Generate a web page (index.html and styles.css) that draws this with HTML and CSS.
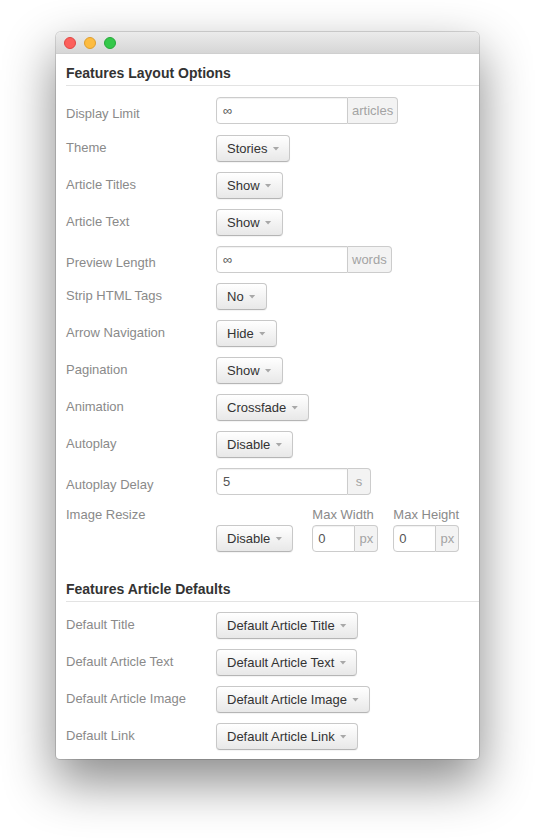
FILE: index.html
```html
<!DOCTYPE html>
<html>
<head>
<meta charset="utf-8">
<link rel="stylesheet" href="styles.css">
</head>
<body>
<div class="window">
  <div class="titlebar">
    <span class="light red"></span>
    <span class="light yellow"></span>
    <span class="light green"></span>
  </div>
  <div class="content">
    <h2 class="legend">Features Layout Options</h2>
    <div class="rows first">
      <div class="row row-input row-tall">
        <span class="label">Display Limit</span>
        <div class="input-append"><span class="field w-long">∞</span><span class="addon">articles</span></div>
      </div>
      <div class="row">
        <span class="label">Theme</span>
        <span class="btn">Stories<span class="caret"></span></span>
      </div>
      <div class="row">
        <span class="label">Article Titles</span>
        <span class="btn">Show<span class="caret"></span></span>
      </div>
      <div class="row">
        <span class="label">Article Text</span>
        <span class="btn">Show<span class="caret"></span></span>
      </div>
      <div class="row row-input">
        <span class="label">Preview Length</span>
        <div class="input-append"><span class="field w-long">∞</span><span class="addon">words</span></div>
      </div>
      <div class="row">
        <span class="label">Strip HTML Tags</span>
        <span class="btn">No<span class="caret"></span></span>
      </div>
      <div class="row">
        <span class="label">Arrow Navigation</span>
        <span class="btn">Hide<span class="caret"></span></span>
      </div>
      <div class="row">
        <span class="label">Pagination</span>
        <span class="btn">Show<span class="caret"></span></span>
      </div>
      <div class="row">
        <span class="label">Animation</span>
        <span class="btn">Crossfade<span class="caret"></span></span>
      </div>
      <div class="row">
        <span class="label">Autoplay</span>
        <span class="btn">Disable<span class="caret"></span></span>
      </div>
      <div class="row row-input">
        <span class="label">Autoplay Delay</span>
        <div class="input-append"><span class="field w-long val">5</span><span class="addon">s</span></div>
      </div>
      <div class="row row-resize">
        <span class="label">Image Resize</span>
        <div class="resize-controls">
          <span class="btn">Disable<span class="caret"></span></span>
          <div class="dim dim-w">
            <span class="dim-label">Max Width</span>
            <div class="input-append"><span class="field w-short val">0</span><span class="addon">px</span></div>
          </div>
          <div class="dim">
            <span class="dim-label">Max Height</span>
            <div class="input-append"><span class="field w-short val">0</span><span class="addon">px</span></div>
          </div>
        </div>
      </div>
    </div>

    <h2 class="legend second">Features Article Defaults</h2>
    <div class="rows">
      <div class="row">
        <span class="label">Default Title</span>
        <span class="btn">Default Article Title<span class="caret"></span></span>
      </div>
      <div class="row">
        <span class="label">Default Article Text</span>
        <span class="btn">Default Article Text<span class="caret"></span></span>
      </div>
      <div class="row">
        <span class="label">Default Article Image</span>
        <span class="btn">Default Article Image<span class="caret"></span></span>
      </div>
      <div class="row">
        <span class="label">Default Link</span>
        <span class="btn">Default Article Link<span class="caret"></span></span>
      </div>
    </div>
  </div>
</div>
</body>
</html>
```

FILE: styles.css
```css
html, body {
  margin: 0;
  padding: 0;
  background: #ffffff;
}

body {
  font-family: "Liberation Sans", Arial, sans-serif;
  font-size: 13px;
  color: #333;
  height: 840px;
  overflow: hidden;
}

.window {
  margin: 32px 0 0 56px;
  width: 423px;
  height: 727px;
  background: #fff;
  border-radius: 5px 5px 4px 4px;
  box-shadow: 0 22px 50px 2px rgba(0, 0, 0, 0.45), 0 0 0 1px rgba(0, 0, 0, 0.14);
  overflow: hidden;
}

.titlebar {
  height: 22px;
  box-sizing: border-box;
  display: flex;
  align-items: center;
  gap: 8px;
  padding-left: 8px;
  background: linear-gradient(#ebebeb, #d6d6d6);
  border-bottom: 1px solid #cfcfcf;
}

.light {
  width: 12px;
  height: 12px;
  box-sizing: border-box;
  border-radius: 50%;
}
.light.red { background: #fc605c; border: 1px solid #df4744; }
.light.yellow { background: #fdbc40; border: 1px solid #de9e2f; }
.light.green { background: #34c84a; border: 1px solid #27a83a; }

.content {
  padding-left: 10px;
}

.legend {
  margin: 9px 0 0 0;
  font-size: 14px;
  font-weight: bold;
  line-height: 20px;
  color: #333;
  padding-bottom: 2px;
  border-bottom: 1px solid #e3e3e3;
}

.legend.second {
  margin-top: 27px;
}

.rows {
  display: flex;
  flex-direction: column;
  gap: 10px;
  margin-top: 10px;
}
.rows.first {
  margin-top: 11px;
}

.row {
  display: flex;
  align-items: flex-start;
  min-height: 27px;
}

.row-tall {
  min-height: 28px;
}

.label {
  flex: none;
  width: 150px;
  color: #8a8a8a;
  line-height: 18px;
  padding-top: 4px;
}

.row-input .label {
  padding-top: 8px;
}

.row-resize .label {
  padding-top: 1px;
}

.btn {
  display: inline-flex;
  align-items: center;
  height: 27px;
  box-sizing: border-box;
  padding: 0 10px 0 10px;
  border: 1px solid #c8c8c8;
  border-bottom-color: #b5b5b5;
  border-radius: 4px;
  background: linear-gradient(#ffffff, #e8e8e8);
  box-shadow: 0 1px 1px rgba(0, 0, 0, 0.05);
  color: #333;
  white-space: nowrap;
}

.caret {
  display: inline-block;
  width: 7px;
  height: 4px;
  margin-left: 5px;
  background: #a8a8a8;
  clip-path: polygon(0 0, 100% 0, 50% 100%);
}

.input-append {
  display: flex;
  height: 27px;
}

.field {
  box-sizing: border-box;
  height: 27px;
  line-height: 25px;
  padding-left: 6px;
  border: 1px solid #cccccc;
  border-radius: 4px 0 0 4px;
  background: #fff;
  color: #555;
  box-shadow: inset 0 1px 1px rgba(0, 0, 0, 0.06);
}

.w-long { width: 132px; }
.w-short { width: 43px; padding-left: 5px; }

.addon {
  box-sizing: border-box;
  height: 27px;
  line-height: 25px;
  min-width: 23px;
  padding: 0 4px;
  text-align: center;
  border: 1px solid #cccccc;
  border-left: none;
  border-radius: 0 4px 4px 0;
  background: #f3f3f3;
  color: #a3a3a3;
}

.resize-controls {
  display: flex;
  align-items: flex-end;
}

.resize-controls .btn {
  margin-right: 19px;
}

.dim {
  display: flex;
  flex-direction: column;
}

.dim-w {
  margin-right: 15px;
}

.dim-label {
  line-height: 18px;
  padding-top: 1px;
  margin-bottom: 1px;
  color: #8a8a8a;
}
```
